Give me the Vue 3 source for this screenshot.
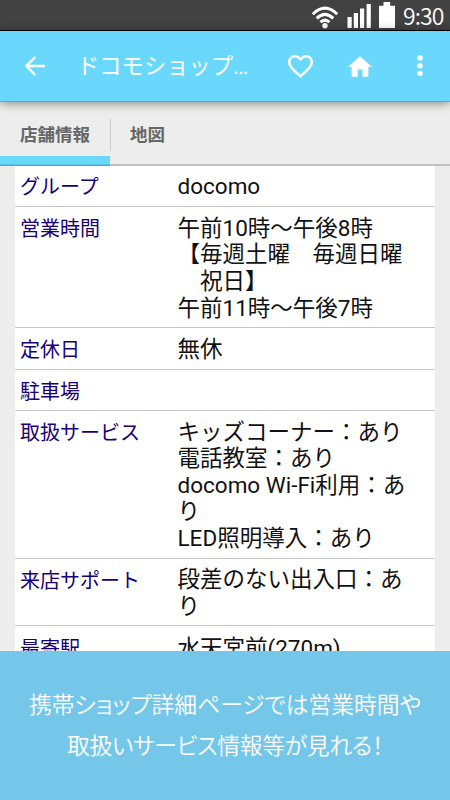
<template>
  <div class="screen">
    <!-- Barre d'état -->
    <div class="status-bar">
      <svg class="wifi" viewBox="0 0 28 24">
        <g fill="none" stroke="#fff" stroke-width="3">
          <path d="M1.8 9.2Q14-2.8 26.2 9.2" />
          <path d="M5.7 13.3Q14 5.3 22.3 13.3" />
          <path d="M9.5 17.2Q14 13 18.5 17.2" />
        </g>
        <circle cx="14" cy="20.7" r="2.7" fill="#fff" />
      </svg>
      <svg class="signal" viewBox="0 0 25 25" fill="#fff">
        <path d="M0.5 13h4.2v11H0.5zM6.8 9h4.2v15H6.8zM13 4.5h4.2V24H13zM19.6 0h4.2v24h-4.2z" />
      </svg>
      <svg class="battery" viewBox="0 0 16 26" fill="#fff">
        <path d="M4.5 0h6.7v3.7H16V26H0V3.7h4.5z" />
      </svg>
      <span class="clock">9:30</span>
    </div>

    <!-- Barre d'application -->
    <header class="app-bar">
      <svg class="back" viewBox="0 0 20 20">
        <path d="M20 10H2M10.3 1L1.4 10l8.9 9" fill="none" stroke="#fff" stroke-width="2.3" />
      </svg>
      <h1 class="title">ドコモショップ<span class="dots">...</span></h1>
      <svg class="heart" viewBox="2 3 20 18.35" fill="#fff">
        <path
          d="M16.5 3c-1.74 0-3.41.81-4.5 2.09C10.91 3.81 9.24 3 7.5 3 4.42 3 2 5.42 2 8.5c0 3.78 3.4 6.86 8.55 11.54L12 21.35l1.45-1.32C18.6 15.36 22 12.28 22 8.5 22 5.42 19.58 3 16.5 3zm-4.4 15.55l-.1.1-.1-.1C7.14 14.24 4 11.39 4 8.5 4 6.5 5.5 5 7.5 5c1.54 0 3.04.99 3.57 2.36h1.87C13.46 5.99 14.96 5 16.5 5c2 0 3.5 1.5 3.5 3.5 0 2.89-3.14 5.74-7.9 10.05z"
        />
      </svg>
      <svg class="home" viewBox="2 3 20 17" fill="#fff">
        <path d="M10 20v-6h4v6h5v-8h3L12 3 2 12h3v8z" />
      </svg>
      <svg class="more" viewBox="0 0 6 22" fill="#fff">
        <circle cx="3" cy="3" r="2.7" />
        <circle cx="3" cy="10.7" r="2.7" />
        <circle cx="3" cy="18.4" r="2.7" />
      </svg>
    </header>

    <nav class="tabs">
      <a class="tab active">店舗情報</a>
      <a class="tab">地図</a>
    </nav>

    <main class="content">
      <dl class="shop-table">
        <div v-for="row in rows" :key="row.label" class="row">
          <dt>{{ row.label }}</dt>
          <dd>
            <div v-for="line in row.lines" :key="line" class="line">{{ line }}</div>
          </dd>
        </div>
      </dl>
    </main>

    <footer class="caption">
      <p>携帯ショップ詳細ページでは営業時間や</p>
      <p class="tight">取扱いサービス情報等が見れる！</p>
    </footer>
  </div>
</template>

<script setup>
import { ref } from 'vue'

const rows = ref([
  { label: 'グループ', lines: ['docomo'] },
  {
    label: '営業時間',
    lines: ['午前10時～午後8時', '【毎週土曜　毎週日曜', '　祝日】', '午前11時～午後7時'],
  },
  { label: '定休日', lines: ['無休'] },
  { label: '駐車場', lines: [] },
  {
    label: '取扱サービス',
    lines: ['キッズコーナー：あり', '電話教室：あり', 'docomo Wi-Fi利用：あ', 'り', 'LED照明導入：あり'],
  },
  { label: '来店サポート', lines: ['段差のない出入口：あ', 'り'] },
  { label: '最寄駅', lines: ['水天宮前(270m)'] },
])
</script>

<style>
body {
  margin: 0;
  overflow: hidden;
}
</style>

<style scoped>
.screen {
  display: flex;
  flex-direction: column;
  width: 450px;
  height: 800px;
  overflow: hidden;
  background: #ededed;
  font-family: Roboto, 'Noto Sans CJK JP', sans-serif;
}

svg {
  display: block;
  flex: none;
}

/* Barre d'état */
.status-bar {
  display: flex;
  flex: none;
  box-sizing: border-box;
  height: 31px;
  padding: 2px 6px 0 0;
  justify-content: flex-end;
  background: #424242;
  border-bottom: 1px solid #000;
}

.wifi {
  width: 28px;
  height: 24px;
  margin: 3px 8px 0 0;
}

.signal {
  width: 25px;
  height: 25px;
  margin: 2px 7px 0 0;
}

.battery {
  width: 16px;
  height: 26px;
  margin-right: 8px;
}

.clock {
  width: 41px;
  color: #fff;
  font-family: 'Noto Sans CJK JP', sans-serif;
  font-size: 23px;
  font-weight: 350;
  line-height: 27px;
  letter-spacing: -0.9px;
  white-space: nowrap;
}

/* Barre d'application */
.app-bar {
  position: relative;
  z-index: 1;
  display: flex;
  flex: none;
  align-items: center;
  box-sizing: border-box;
  height: 71px;
  padding: 0 27px 0 25px;
  background: #69d8fc;
  border-bottom: 1px solid #839ba4;
  box-shadow: 0 1px 10px rgba(0, 0, 0, 0.45);
}

.back {
  width: 20px;
  height: 20px;
}

.title {
  flex: 1;
  margin: 0 0 0 32px;
  color: #fff;
  font-size: 22.3px;
  font-weight: 400;
  line-height: 30px;
  white-space: nowrap;
}

.dots {
  letter-spacing: -1px;
}

.heart {
  width: 25px;
  height: 23px;
}

.home {
  width: 24px;
  height: 21px;
  margin: 0 45px 0 35px;
}

.more {
  width: 6px;
  height: 22px;
}

/* Onglets */
.tabs {
  display: flex;
  flex: none;
  box-sizing: border-box;
  height: 64px;
  border-bottom: 2px solid #c1c1c1;
}

.tab {
  box-sizing: border-box;
  height: 64px;
  padding: 20px 20px 0;
  color: #666;
  font-size: 17.5px;
  font-weight: 700;
  line-height: 26px;
}

.tab.active {
  width: 110px;
  background: linear-gradient(#69d8fc, #69d8fc 8px, #42aed0 9px) bottom / 100% 10px no-repeat;
}

.tab + .tab {
  height: 32px;
  margin-top: 17px;
  padding: 3px 19px 0;
  border-left: 1px solid #ccc;
}

/* Tableau des informations */
.content {
  flex: 1;
  min-height: 0;
  overflow: hidden;
  padding: 0 15px;
}

.shop-table {
  margin: 0;
  background: #fff;
}

.row {
  display: flex;
  box-sizing: border-box;
  min-height: 41.4px;
  padding: 7.4px 0 6.2px 5px;
  border-bottom: 1px solid #c6c6c6;
}

.row:first-child {
  padding-top: 6.6px;
}

.row:last-child {
  padding-top: 8.4px;
}

dt {
  flex: none;
  width: 157.5px;
  padding-top: 1.5px;
  box-sizing: border-box;
  height: 26.6px;
  color: #170075;
  font-size: 20px;
  font-weight: 400;
  line-height: 27px;
}

dd {
  margin: 0;
  color: #111;
}

.line {
  height: 26.6px;
  font-size: 22.5px;
  font-weight: 400;
  line-height: 26.6px;
  white-space: pre;
}

/* Légende */
.caption {
  flex: none;
  box-sizing: border-box;
  height: 149px;
  padding-top: 32px;
  background: #74c7e9;
  color: #fff;
  text-align: center;
}

.caption p {
  margin: 0;
  font-family: 'Noto Sans CJK JP', sans-serif;
  font-size: 22.8px;
  font-weight: 350;
  line-height: 41px;
  font-feature-settings: 'palt';
  white-space: nowrap;
}

.caption .tight {
  letter-spacing: -0.3px;
}
</style>
